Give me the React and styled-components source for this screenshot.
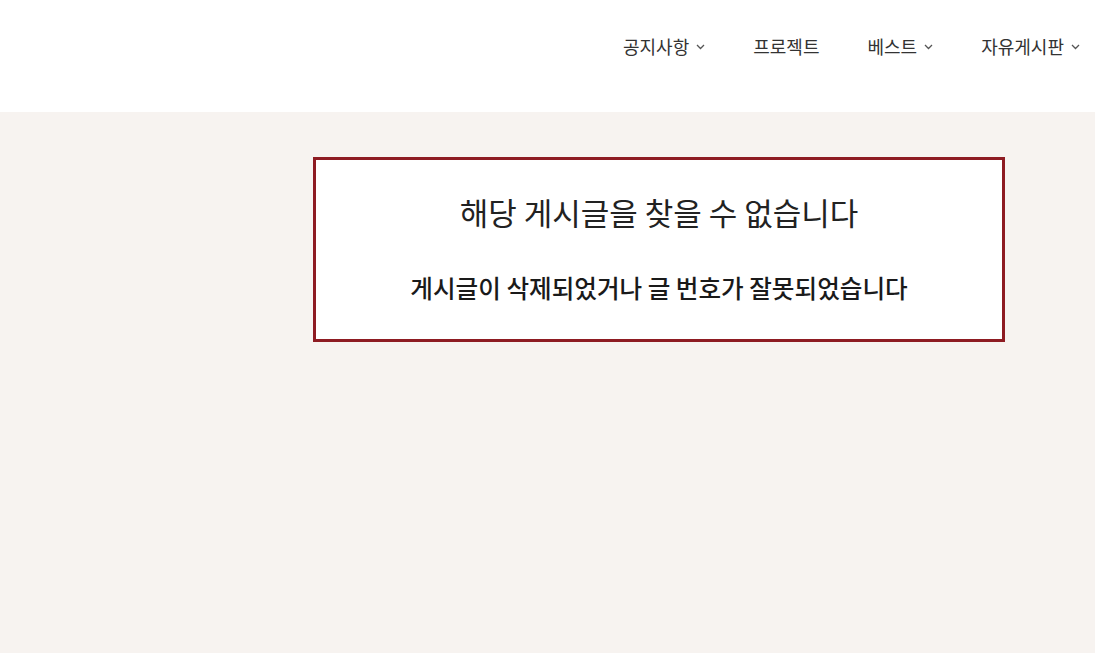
import React from "react";
import styled, { createGlobalStyle } from "styled-components";

const GlobalStyle = createGlobalStyle`
  html, body {
    margin: 0;
    padding: 0;
    height: 100%;
  }
  body {
    background: #f7f3f0;
    font-family: "Noto Sans CJK KR", "Noto Sans", sans-serif;
    color: #333;
  }
`;

const Page = styled.div`
  min-height: 100vh;
  display: flex;
  flex-direction: column;
`;

const Header = styled.header`
  height: 112px;
  background: #fff;
  display: flex;
  align-items: flex-start;
  justify-content: flex-end;
  padding: 33px 15px 0 0;
  box-sizing: border-box;
`;

const Nav = styled.nav`
  display: flex;
  align-items: center;
  gap: 48px;
`;

const NavItem = styled.a`
  display: flex;
  align-items: center;
  gap: 7px;
  font-size: 18px;
  line-height: 26px;
  color: #333;
  text-decoration: none;
  cursor: pointer;
`;

const Chevron = styled.svg`
  width: 9px;
  height: 6px;
  margin-top: 2px;
`;

const Main = styled.main`
  flex: 1;
  display: flex;
  padding: 45px 0 0 313px;
`;

const MessageBox = styled.section`
  width: 692px;
  height: 185px;
  box-sizing: border-box;
  background: #fff;
  border: 3px solid #8e1b22;
  display: flex;
  flex-direction: column;
  align-items: center;
  padding-top: 31px;
`;

const Title = styled.h2`
  margin: 0;
  font-size: 31px;
  font-weight: 400;
  line-height: 42px;
  color: #222;
`;

const Subtitle = styled.p`
  margin: 38px 0 0;
  font-size: 24.6px;
  font-weight: 500;
  line-height: 32px;
  color: #1a1a1a;
`;

const Down = () => (
  <Chevron viewBox="0 0 9 6" fill="none">
    <path d="M1 1l3.5 3.5L8 1" stroke="#555" strokeWidth="1.3" />
  </Chevron>
);

const menu = [
  { label: "공지사항", sub: true },
  { label: "프로젝트", sub: false },
  { label: "베스트", sub: true },
  { label: "자유게시판", sub: true },
];

export default function App() {
  return (
    <Page>
      <GlobalStyle />
      <Header>
        <Nav>
          {menu.map((m) => (
            <NavItem key={m.label}>
              {m.label}
              {m.sub && <Down />}
            </NavItem>
          ))}
        </Nav>
      </Header>
      <Main>
        <MessageBox>
          <Title>해당 게시글을 찾을 수 없습니다</Title>
          <Subtitle>게시글이 삭제되었거나 글 번호가 잘못되었습니다</Subtitle>
        </MessageBox>
      </Main>
    </Page>
  );
}
